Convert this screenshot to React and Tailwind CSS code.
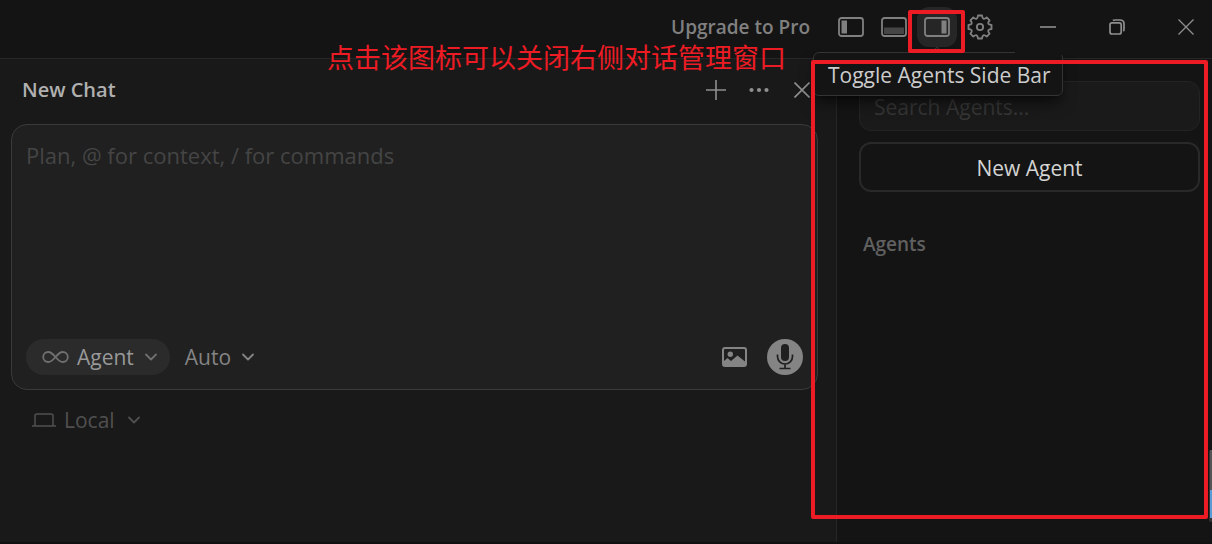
import { useState } from 'react';

const iconButton = 'flex items-center justify-center shrink-0 rounded-xl';

function PanelIcon({ side }) {
  return (
    <svg width="26" height="20" viewBox="0 0 26 20" fill="none">
      <rect x="1" y="1" width="24" height="18" rx="2.5" stroke="currentColor" strokeWidth="1.8" />
      {side === 'left' && <rect x="3.5" y="3.5" width="5.5" height="13" fill="currentColor" />}
      {side === 'bottom' && <rect x="3" y="10.5" width="20" height="6.5" fill="#454545" />}
      {side === 'right' && <rect x="17.5" y="3.5" width="5" height="13" fill="currentColor" />}
    </svg>
  );
}

// eight teeth with rounded valleys between them
function gearPath() {
  const point = (deg, r) => {
    const rad = (deg * Math.PI) / 180;
    return `${(12 + r * Math.sin(rad)).toFixed(2)} ${(12 - r * Math.cos(rad)).toFixed(2)}`;
  };
  let d = `M${point(-10, 10.8)}`;
  for (let a = 0; a < 360; a += 45) {
    d += `L${point(a + 10, 10.8)}Q${point(a + 22.5, 6)} ${point(a + 35, 10.8)}`;
  }
  return d + 'Z';
}

function GearIcon() {
  return (
    <svg width="26" height="26" viewBox="0 0 24 24" fill="none" stroke="currentColor" strokeWidth="1.7" strokeLinejoin="round">
      <path d={gearPath()} />
      <circle cx="12" cy="12" r="2.9" />
    </svg>
  );
}

function Chevron() {
  return (
    <svg width="14" height="10" viewBox="0 0 14 10" fill="none" stroke="currentColor" strokeWidth="1.8" strokeLinecap="round" strokeLinejoin="round">
      <path d="M2 2.5l5 5 5-5" />
    </svg>
  );
}

function TitleBar({ open, onToggle }) {
  return (
    <header className="flex items-center justify-end h-[59px] pb-1 border-b border-[#262626] bg-[#141414]">
      <a href="#pricing" className="mr-[21px] text-[19px] leading-6 font-semibold text-[#808080]">Upgrade to Pro</a>
      <div className="flex gap-[3px] mr-[15px] text-[#808080]">
        <button aria-label="Toggle Primary Side Bar" className={`${iconButton} size-10`}><PanelIcon side="left" /></button>
        <button aria-label="Toggle Panel" className={`${iconButton} size-10`}><PanelIcon side="bottom" /></button>
        <div className="relative">
          <button
            aria-label="Toggle Agents Side Bar"
            aria-pressed={open}
            aria-describedby="agents-tip"
            onClick={onToggle}
            className={`${iconButton} size-10 bg-[#252625]`}
          >
            <PanelIcon side="right" />
          </button>
          <div
            id="agents-tip"
            role="tooltip"
            className="absolute z-20 top-[45px] -left-[104px] w-[250px] h-[44px] pl-[14px] pt-2 rounded-md border border-[#343434] bg-[#141414] text-[21px] leading-7 text-[#cccccc] whitespace-nowrap shadow-lg shadow-black/50"
          >
            Toggle Agents Side Bar
            <span className="absolute -top-[5px] left-[119px] size-2 rotate-45 border-t border-l border-[#343434] bg-[#141414]" />
          </div>
          <div className="absolute z-30 top-[3px] -left-[9px] w-[57px] h-[43px] border-4 border-[#ed1c24] rounded-xs pointer-events-none" />
        </div>
        <button aria-label="Settings" className={`${iconButton} size-10`}><GearIcon /></button>
      </div>
      <div className="relative z-20 flex gap-[17px] pl-[7px] py-2 bg-[#141414] text-[#8f8f8f]">
        <button aria-label="Minimize" className={`${iconButton} w-[52px] h-10`}>
          <svg width="16" height="16" viewBox="0 0 16 16"><path d="M0 8h16" stroke="currentColor" strokeWidth="1.6" /></svg>
        </button>
        <button aria-label="Restore" className={`${iconButton} w-[52px] h-10`}>
          <svg width="16" height="16" viewBox="0 0 16 16" fill="none" stroke="currentColor" strokeWidth="1.7">
            <rect x="1" y="3.8" width="11.2" height="11.2" rx="2" />
            <path d="M3.8 1.5Q4.500 1 6.200 1h4.800C13.500 1 15 2.500 15 4.800v5q0 1.700-.6 2.400" />
          </svg>
        </button>
        <button aria-label="Close window" className={`${iconButton} w-[52px] h-10`}>
          <svg width="16" height="16" viewBox="0 0 16 16"><path d="M.5.5l15 15M15.500.5l-15 15" stroke="currentColor" strokeWidth="1.3" /></svg>
        </button>
      </div>
    </header>
  );
}

function Composer() {
  return (
    <form className="flex flex-col h-[266px] p-[14px] pt-4 rounded-2xl border border-[#3a3a3a] bg-[#202020]">
      <textarea
        aria-label="Message"
        placeholder="Plan, @ for context, / for commands"
        className="grow resize-none outline-none bg-transparent text-[22px] leading-7 text-[#cccccc] placeholder:text-[#454545]"
      />
      <div className="flex items-center text-[#848484]">
        <button type="button" className="flex items-center h-9 pl-4 pr-3 rounded-full bg-[#2b2b2b] text-[21px] leading-7 text-[#999999]">
          <svg width="27" height="12" viewBox="0 0 27 12" fill="none" stroke="#707070" strokeWidth="1.8" className="mr-2">
            <path d="M13.500 6C11 3 9 1 6.200 1a5 5 0 0 0 0 10C9 11 11 9 13.500 6s4.500-5 7.300-5a5 5 0 0 1 0 10c-2.800 0-4.800-2-7.300-5z" />
          </svg>
          Agent
          <span className="ml-[10px] text-[#707070]"><Chevron /></span>
        </button>
        <button type="button" className="flex items-center ml-[15px] text-[21px] leading-7">
          Auto
          <span className="ml-[10px]"><Chevron /></span>
        </button>
        <button type="button" aria-label="Attach image" className="ml-auto mr-5">
          <svg width="25" height="20" viewBox="0 0 25 20" fill="none">
            <rect x="1" y="1" width="23" height="18" rx="2" stroke="currentColor" strokeWidth="2" />
            <circle cx="8.300" cy="7.300" r="2.700" fill="currentColor" />
            <path d="M2 14l3.500-3 3.500 3 6.500-5.500 7.500 6V19H2z" fill="currentColor" />
          </svg>
        </button>
        <button type="button" aria-label="Voice input" className="flex items-center justify-center size-9 rounded-full bg-[#848484] text-[#202020]">
          <svg width="18" height="26" viewBox="0 0 18 26" fill="none">
            <rect x="5" y="0" width="8" height="17" rx="4" fill="currentColor" />
            <path d="M1.500 10.500v2a7.500 7.500 0 0 0 15 0v-2M9 20v4M3.500 24.500h11" stroke="currentColor" strokeWidth="1.700" />
          </svg>
        </button>
      </div>
    </form>
  );
}

function ChatPane() {
  return (
    <main className="grow min-w-0 pl-[11px] pr-[18px] bg-[#191919]">
      <div className="flex items-center h-[65px] pb-[3px] pl-[11px]">
        <h1 className="grow text-xl leading-7 font-semibold text-[#b0b0b0]">New Chat</h1>
        <div className="flex gap-[11px] text-[#8f8f8f]">
          <button aria-label="New chat" className={`${iconButton} size-8`}>
            <svg width="20" height="20" viewBox="0 0 20 20"><path d="M0 10h20M10 0v20" stroke="currentColor" strokeWidth="1.600" /></svg>
          </button>
          <button aria-label="More" className={`${iconButton} size-8`}>
            <svg width="20" height="6" viewBox="0 0 20 6" fill="currentColor">
              <circle cx="2.500" cy="3" r="2.100" /><circle cx="10" cy="3" r="2.100" /><circle cx="17.500" cy="3" r="2.100" />
            </svg>
          </button>
          <button aria-label="Close chat" className={`${iconButton} size-8`}>
            <svg width="16" height="16" viewBox="0 0 16 16"><path d="M.5.5l15 15M15.500.5l-15 15" stroke="currentColor" strokeWidth="1.600" /></svg>
          </button>
        </div>
      </div>
      <Composer />
      <button className="flex items-center mt-4 ml-[21px] text-[21px] leading-7 text-[#505050]">
        <svg width="24" height="14" viewBox="0 0 24 14" fill="none" stroke="currentColor" strokeWidth="1.500" className="mr-2">
          <path d="M3 12.500V3q0-2 2-2h14q2 0 2 2v9.500M0 13h24" />
        </svg>
        Local
        <span className="ml-3"><Chevron /></span>
      </button>
    </main>
  );
}

function AgentsPane() {
  return (
    <aside className="relative w-[376px] shrink-0 pl-[22px] pr-3 pt-[22px] border-l border-[#262626] bg-[#141414]">
      <input
        type="search"
        aria-label="Search Agents"
        placeholder="Search Agents..."
        className="block w-full h-[50px] px-[14px] pt-[2px] rounded-xl border border-[#242424] bg-[#1a1a1a] text-[21px] leading-7 text-[#cccccc] outline-none placeholder:text-[#363636]"
      />
      <button className="block w-full h-[50px] mt-[11px] pt-[2px] rounded-xl border-2 border-[#292929] text-[21px] leading-7 text-[#d4d4d4]">New Agent</button>
      <h2 className="mt-10 pl-1 text-[19px] leading-6 font-semibold text-[#606060]">Agents</h2>
      <div className="absolute z-30 top-[1px] bottom-[23px] -left-[26px] right-1 border-4 border-[#ed1c24] rounded-xs pointer-events-none" />
      <div className="absolute right-0 bottom-5 w-[3px] h-[72px] pl-[1px] rounded-l-xs bg-[#333333]">
        <div className="h-10 bg-[#555555]" />
        <div className="h-7 bg-[#5b9bd5]" />
      </div>
    </aside>
  );
}

export default function App() {
  const [open, setOpen] = useState(true);

  return (
    <div className="relative flex flex-col min-h-screen overflow-hidden bg-[#141414] font-['Open_Sans','Noto_Sans_CJK_SC',sans-serif]">
      <TitleBar open={open} onToggle={() => setOpen(!open)} />
      <div className="flex grow">
        <ChatPane />
        {open && <AgentsPane />}
      </div>
      <div className="h-[2px] bg-[#111111]" />
      <p className="absolute z-30 top-[38px] right-[426px] text-[27px] leading-10 text-[#ed1c24] whitespace-nowrap">
        点击该图标可以关闭右侧对话管理窗口
      </p>
    </div>
  );
}
